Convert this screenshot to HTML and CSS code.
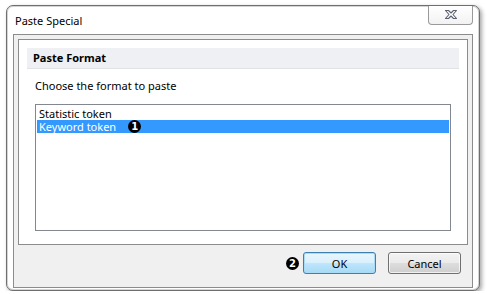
FILE: index.html
```html
<!DOCTYPE html>
<html>
<head>
<meta charset="utf-8">
<link rel="stylesheet" href="styles.css">
</head>
<body>
<div class="window">
  <div class="titlebar">
    <span class="title">Paste Special</span>
    <div class="close">
      <svg width="14" height="11" viewBox="0 0 14 11"><path d="M1.5 1.5 H4.5 L7 4 L9.5 1.5 H12.5 L9 5.5 L12.5 9.5 H9.5 L7 7 L4.5 9.5 H1.5 L5 5.5 Z" fill="#fff" stroke="#5b6170" stroke-width="1.1" stroke-linejoin="round"/></svg>
    </div>
  </div>
  <div class="client">
    <div class="panel">
      <div class="header">Paste Format</div>
      <div class="prompt">Choose the format to paste</div>
      <div class="listbox">
        <div class="item">Statistic token</div>
        <div class="item selected"><span>Keyword token</span><span class="badge">1</span></div>
      </div>
    </div>
    <div class="footer">
      <span class="badge">2</span>
      <button class="btn ok">OK</button>
      <button class="btn">Cancel</button>
    </div>
  </div>
</div>
</body>
</html>
```

FILE: styles.css
```css
html, body {
  margin: 0;
  padding: 0;
  background: #ffffff;
}
body {
  font-family: "Noto Sans", "Open Sans", sans-serif;
  font-size: 11px;
  color: #000;
}
.window {
  margin: 5px 0 0 6px;
  width: 474px;
  height: 286px;
  box-sizing: border-box;
  border: 1px solid #6f6f6f;
  border-radius: 7px;
  background: #ffffff;
  box-shadow: inset 0 0 0 1px #d4d4d4, 2px 2px 4px rgba(0,0,0,0.35);
  display: flex;
  flex-direction: column;
  padding: 0 6px 2px 6px;
}
.titlebar {
  height: 28px;
  display: flex;
  align-items: flex-start;
  justify-content: space-between;
}
.title {
  margin-top: 7px;
  margin-left: 2px;
  font-size: 11px;
  color: #000;
}
.close {
  width: 45px;
  height: 19px;
  box-sizing: border-box;
  border: 1px solid #9a9a9a;
  border-top: none;
  border-radius: 0 0 4px 4px;
  background: linear-gradient(#ffffff, #f2f2f2);
  display: flex;
  align-items: center;
  justify-content: center;
}
.close svg { display: block; margin-top: -1px; }
.client {
  flex: 1;
  border: 1px solid #8c8c8c;
  background: #f0f0f0;
  padding: 4px 4px 0 4px;
  display: flex;
  flex-direction: column;
}
.panel {
  height: 206px;
  box-sizing: border-box;
  border: 1px solid #8c8c8c;
  background: #fff;
  padding: 8px 8px 0 8px;
}
.header {
  height: 21px;
  box-sizing: border-box;
  background: #eff0f4;
  border-bottom: 1px solid #e0e2e6;
  font-weight: bold;
  padding-left: 6px;
  line-height: 20px;
  color: #000;
}
.prompt {
  margin: 9px 0 0 8px;
  height: 15px;
  line-height: 15px;
  color: #000;
}
.listbox {
  margin: 11px 8px 0 8px;
  height: 127px;
  box-sizing: border-box;
  border: 1px solid #828790;
  padding: 2px 1px;
}
.item {
  height: 13px;
  line-height: 12px;
  padding-left: 2px;
  display: flex;
  align-items: center;
}
.item.selected {
  background: #3399ff;
  color: #fff;
}
.badge {
  width: 13px;
  height: 13px;
  border-radius: 50%;
  background: #000;
  color: #fff;
  font-family: "DejaVu Sans", sans-serif;
  font-weight: bold;
  font-size: 10px;
  line-height: 13px;
  text-align: center;
  display: inline-block;
  flex: none;
}
.item .badge {
  margin-left: 12px;
}
.footer {
  flex: 1;
  display: flex;
  align-items: flex-start;
  justify-content: flex-end;
  padding: 7px 7px 0 0;
}
.footer .badge {
  margin: 5px 4px 0 0;
}
.btn {
  width: 73px;
  height: 22px;
  box-sizing: border-box;
  border: 1px solid #707070;
  border-radius: 3px;
  background: linear-gradient(#f3f3f3 0%, #ebebeb 48%, #dddddd 52%, #cfcfcf 100%);
  box-shadow: inset 0 0 0 1px rgba(255,255,255,0.7);
  font-family: "Noto Sans", "Open Sans", sans-serif;
  font-size: 11px;
  color: #000;
  padding: 0;
  margin-left: 12px;
}
.btn.ok {
  margin-left: 0;
  border-color: #3c7fb1;
  background: linear-gradient(#eaf6fd 0%, #d9f0fc 48%, #bee6fd 52%, #a7d9f5 100%);
  box-shadow: inset 0 0 0 1px #a9dbf6;
}
```
